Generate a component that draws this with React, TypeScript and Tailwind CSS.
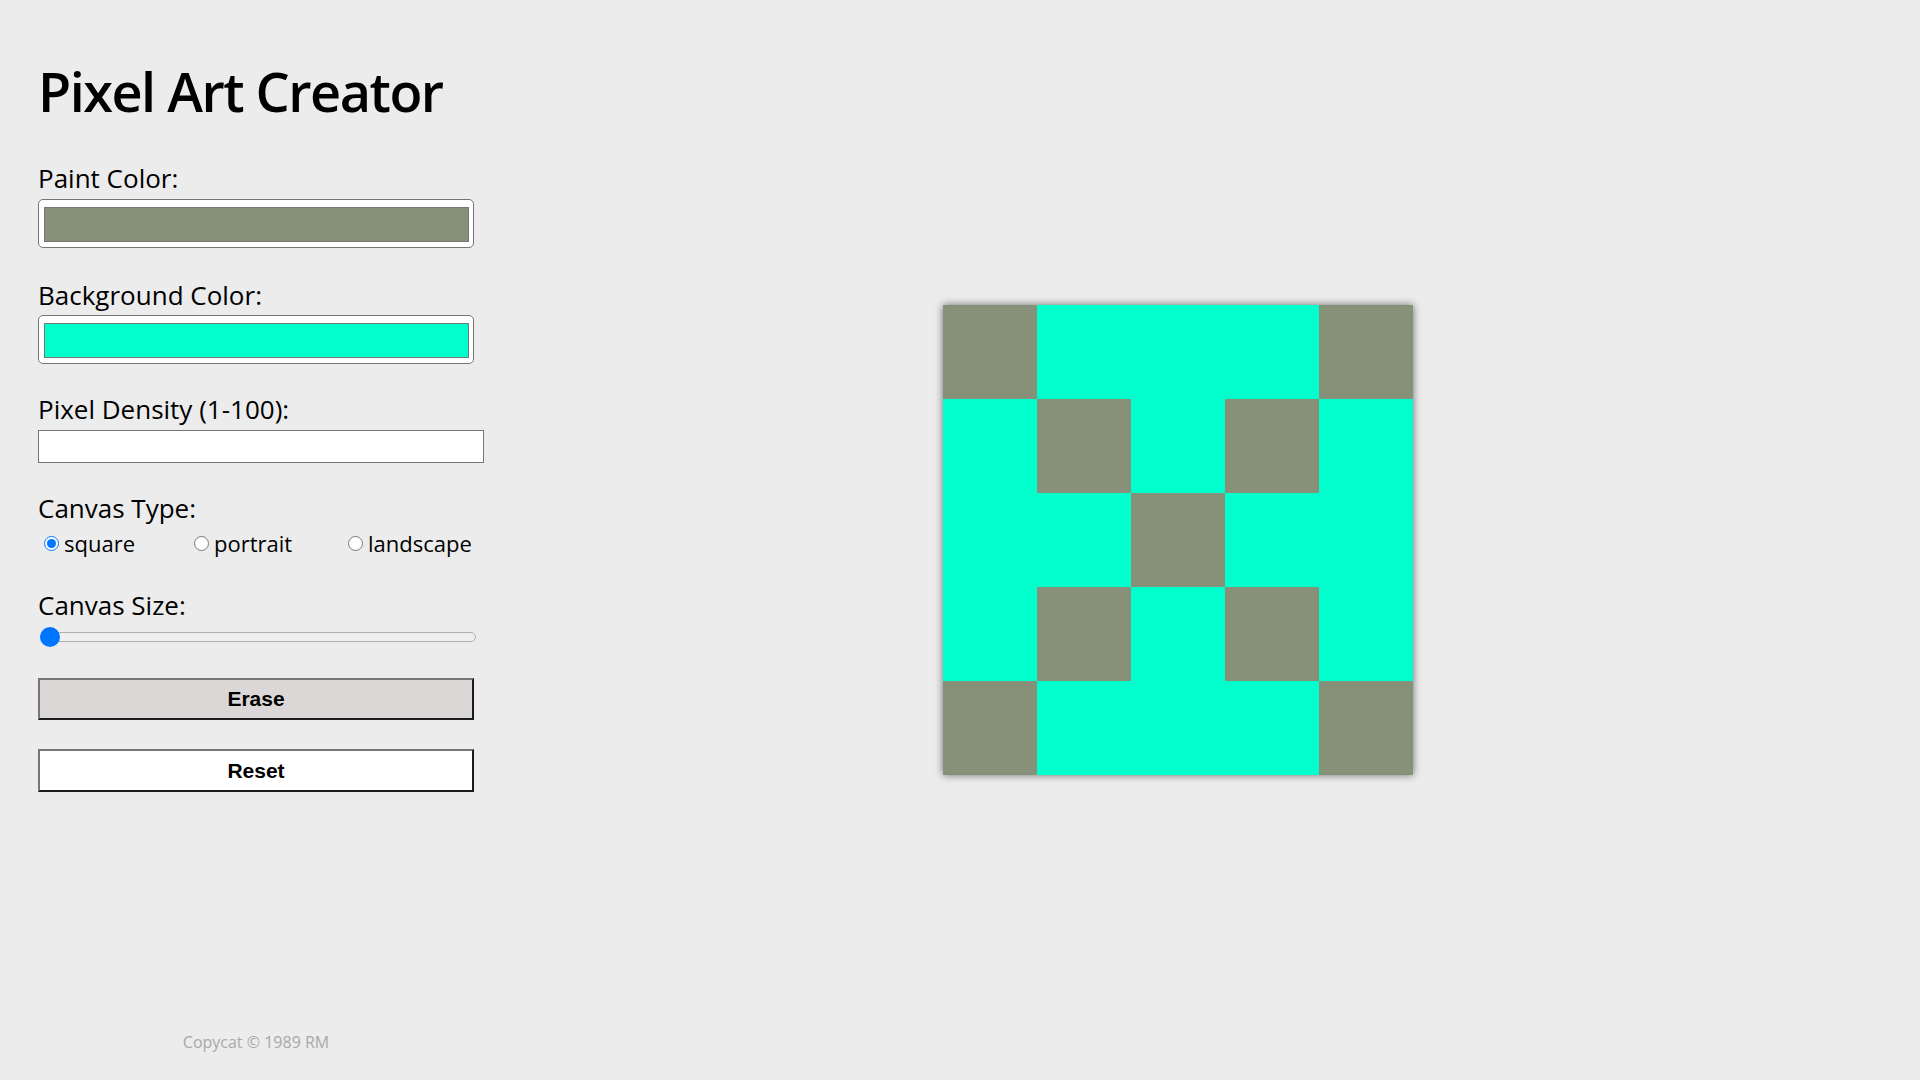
import { useState } from 'react';

const PAINT = '#879079';
const BG = '#00ffcc';

// X pattern on a 5x5 grid, 1 = painted
const pattern = [
  [1, 0, 0, 0, 1],
  [0, 1, 0, 1, 0],
  [0, 0, 1, 0, 0],
  [0, 1, 0, 1, 0],
  [1, 0, 0, 0, 1],
];

const canvasTypes = [
  { id: 'square', width: 'w-[150px]' },
  { id: 'portrait', width: 'w-[154px]' },
  { id: 'landscape', width: 'flex-1' },
];

function ColorField({ color }: { color: string }) {
  return (
    <div className="w-[436px] h-[49px] bg-white border border-[#767676] rounded-[5px] pl-[5px] pr-[4px] pt-[7px] pb-[5px]">
      <div className="w-full h-full border border-[#777777]" style={{ backgroundColor: color }} />
    </div>
  );
}

export default function App() {
  const [canvasType, setCanvasType] = useState('square');

  return (
    <div className="min-h-screen w-full bg-[#ececec] flex font-['Open_Sans',sans-serif] text-black">
      {/* Controls */}
      <aside className="w-[512px] h-screen flex flex-col pl-[38px]">
        <h1 className="mt-[61px] text-[54px] leading-[60px] font-semibold tracking-[-1.5px]">Pixel Art Creator</h1>

        <label className="mt-[42px] text-[26px] leading-[30px]">Paint Color:</label>
        <div className="mt-[6px]">
          <ColorField color={PAINT} />
        </div>

        <label className="mt-[32px] text-[26px] leading-[30px]">Background Color:</label>
        <div className="mt-[5px]">
          <ColorField color={BG} />
        </div>

        <label className="mt-[30px] text-[26px] leading-[30px]">Pixel Density (1-100):</label>
        <input
          type="text"
          className="mt-[6px] w-[446px] h-[33px] bg-white border border-[#767676] px-2 outline-none"
        />

        <label className="mt-[30px] text-[26px] leading-[30px]">Canvas Type:</label>
        <div className="mt-[7px] w-[436px] flex items-center text-[22px] leading-[26px]">
          {canvasTypes.map(t => (
            <label key={t.id} className={`flex items-center ${t.width}`}>
              <input
                type="radio"
                name="canvasType"
                checked={canvasType === t.id}
                onChange={() => setCanvasType(t.id)}
                className="ml-[6px] mr-[5px] w-[15px] h-[15px] accent-[#0075ff]"
              />
              {t.id}
            </label>
          ))}
        </div>

        <label className="mt-[34px] text-[26px] leading-[30px]">Canvas Size:</label>
        <div className="relative mt-[7px] w-[438px] h-[20px] flex items-center">
          <div className="w-full h-[10px] ml-[2px] rounded-full border border-[#b0b0b0] bg-[#efefef]" />
          <div className="absolute left-[2px] top-0 w-[20px] h-[20px] rounded-full bg-[#0075ff]" />
        </div>

        <button className="mt-[31px] w-[436px] h-[42px] bg-[#dbd7d6] border-2 border-t-[#767676] border-l-[#767676] border-b-[#1b1b1b] border-r-[#1b1b1b] font-['Liberation_Sans',sans-serif] font-bold text-[21px]">
          Erase
        </button>
        <button className="mt-[29px] w-[436px] h-[43px] bg-white border-2 border-t-[#767676] border-l-[#767676] border-b-[#1b1b1b] border-r-[#1b1b1b] font-['Liberation_Sans',sans-serif] font-bold text-[21px]">
          Reset
        </button>

        <footer className="mt-auto mb-[26px] -ml-[38px] text-center text-[16px] text-[#a9a9a9]">
          Copycat © 1989 RM
        </footer>
      </aside>

      {/* Canvas */}
      <main className="flex-1 h-screen flex items-center justify-center pr-[76px]">
        <div className="w-[470px] h-[470px] grid grid-cols-5 grid-rows-5 shadow-[0_0_8px_rgba(0,0,0,0.55)]">
          {pattern.flat().map((p, i) => (
            <div key={i} style={{ backgroundColor: p ? PAINT : BG }} />
          ))}
        </div>
      </main>
    </div>
  );
}
